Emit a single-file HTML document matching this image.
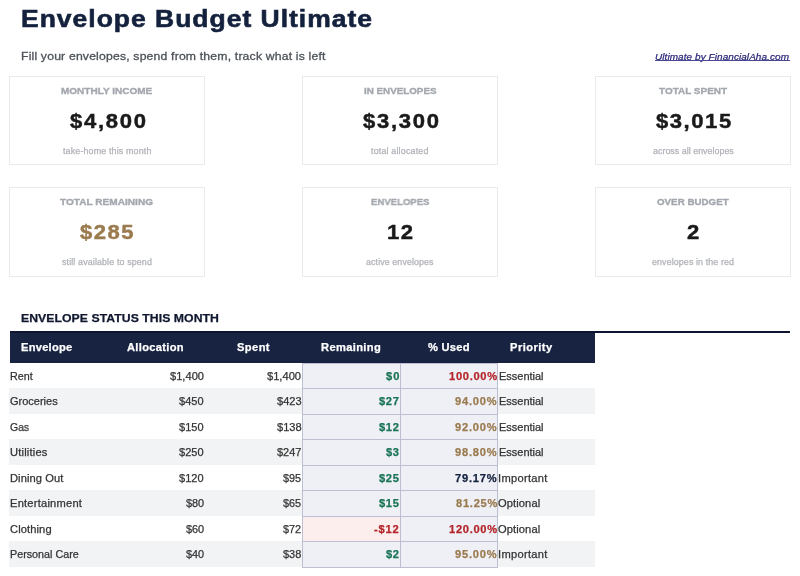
<!DOCTYPE html>
<html><head><meta charset="utf-8"><style>
html,body{margin:0;padding:0;background:#fff;width:800px;height:576px;overflow:hidden;position:relative}
body{font-family:"Liberation Sans",sans-serif}
.r{position:absolute}
.t{position:absolute;white-space:nowrap;line-height:normal;-webkit-text-stroke:0.25px currentColor}
.t span{display:inline-block;transform-origin:0 0;will-change:transform}
</style></head><body>
<div class="t" style="left:20.94px;top:5.20px;font-size:24.09px;font-weight:700;font-style:normal;color:#14213d;letter-spacing:0.903px;-webkit-text-stroke:0.6px currentColor"><span style="transform:scaleX(1.1000)">Envelope Budget Ultimate</span></div>
<div class="t" style="left:21.20px;top:49.80px;font-size:11.55px;font-weight:400;font-style:normal;color:#4d5259;letter-spacing:0.157px;-webkit-text-stroke:0.3px currentColor"><span style="transform:scaleX(1.0600)">Fill your envelopes, spend from them, track what is left</span></div>
<div class="t" style="left:654.95px;top:51.00px;font-size:9.45px;font-weight:400;font-style:italic;color:#2e2a7c;letter-spacing:0.058px"><span style="transform:scaleX(1.0600)">Ultimate by FinancialAha.com</span></div>
<div class="r" style="left:655px;top:60px;width:135px;height:1px;background:#4b4790"></div>
<div class="r" style="left:9px;top:76px;width:194px;height:87px;border:1px solid #eaeaec;background:#fff"></div>
<div class="t" style="left:61.21px;top:85.20px;font-size:9.72px;font-weight:700;font-style:normal;color:#a3a7ae;letter-spacing:0.000px;-webkit-text-stroke:0.35px currentColor"><span style="transform:scaleX(1.0299)">MONTHLY INCOME</span></div>
<div class="t" style="left:69.65px;top:109.30px;font-size:21.0px;font-weight:700;font-style:normal;color:#1a1a1a;letter-spacing:1.613px;-webkit-text-stroke:0.45px currentColor"><span style="transform:scaleX(1.0500)">$4,800</span></div>
<div class="t" style="left:62.86px;top:146.30px;font-size:8.4px;font-weight:400;font-style:normal;color:#b0b3b8;letter-spacing:0.147px"><span style="transform:scaleX(1.0600)">take-home this month</span></div>
<div class="r" style="left:302px;top:76px;width:194px;height:87px;border:1px solid #eaeaec;background:#fff"></div>
<div class="t" style="left:363.69px;top:85.20px;font-size:9.72px;font-weight:700;font-style:normal;color:#a3a7ae;letter-spacing:0.000px;-webkit-text-stroke:0.35px currentColor"><span style="transform:scaleX(1.0088)">IN ENVELOPES</span></div>
<div class="t" style="left:362.65px;top:109.30px;font-size:21.0px;font-weight:700;font-style:normal;color:#1a1a1a;letter-spacing:1.613px;-webkit-text-stroke:0.45px currentColor"><span style="transform:scaleX(1.0500)">$3,300</span></div>
<div class="t" style="left:371.36px;top:146.30px;font-size:8.4px;font-weight:400;font-style:normal;color:#b0b3b8;letter-spacing:0.173px"><span style="transform:scaleX(1.0600)">total allocated</span></div>
<div class="r" style="left:595px;top:76px;width:194px;height:87px;border:1px solid #eaeaec;background:#fff"></div>
<div class="t" style="left:658.89px;top:85.20px;font-size:9.72px;font-weight:700;font-style:normal;color:#a3a7ae;letter-spacing:0.000px;-webkit-text-stroke:0.35px currentColor"><span style="transform:scaleX(1.0245)">TOTAL SPENT</span></div>
<div class="t" style="left:655.65px;top:109.30px;font-size:21.0px;font-weight:700;font-style:normal;color:#1a1a1a;letter-spacing:1.468px;-webkit-text-stroke:0.45px currentColor"><span style="transform:scaleX(1.0500)">$3,015</span></div>
<div class="t" style="left:652.60px;top:146.30px;font-size:8.4px;font-weight:400;font-style:normal;color:#b0b3b8;letter-spacing:0.018px"><span style="transform:scaleX(1.0600)">across all envelopes</span></div>
<div class="r" style="left:9px;top:187px;width:194px;height:88px;border:1px solid #eaeaec;background:#fff"></div>
<div class="t" style="left:60.26px;top:196.20px;font-size:9.72px;font-weight:700;font-style:normal;color:#a3a7ae;letter-spacing:-0.000px;-webkit-text-stroke:0.35px currentColor"><span style="transform:scaleX(1.0378)">TOTAL REMAINING</span></div>
<div class="t" style="left:80.41px;top:220.30px;font-size:21.0px;font-weight:700;font-style:normal;color:#9a7b4f;letter-spacing:1.454px;-webkit-text-stroke:0.45px currentColor"><span style="transform:scaleX(1.0500)">$285</span></div>
<div class="t" style="left:62.08px;top:257.30px;font-size:8.4px;font-weight:400;font-style:normal;color:#b0b3b8;letter-spacing:0.123px"><span style="transform:scaleX(1.0600)">still available to spend</span></div>
<div class="r" style="left:302px;top:187px;width:194px;height:88px;border:1px solid #eaeaec;background:#fff"></div>
<div class="t" style="left:370.72px;top:196.20px;font-size:9.72px;font-weight:700;font-style:normal;color:#a3a7ae;letter-spacing:0.000px;-webkit-text-stroke:0.35px currentColor"><span style="transform:scaleX(0.9829)">ENVELOPES</span></div>
<div class="t" style="left:387.02px;top:220.30px;font-size:21.0px;font-weight:700;font-style:normal;color:#1a1a1a;letter-spacing:1.488px;-webkit-text-stroke:0.45px currentColor"><span style="transform:scaleX(1.0500)">12</span></div>
<div class="t" style="left:366.21px;top:257.30px;font-size:8.4px;font-weight:400;font-style:normal;color:#b0b3b8;letter-spacing:0.089px"><span style="transform:scaleX(1.0600)">active envelopes</span></div>
<div class="r" style="left:595px;top:187px;width:194px;height:88px;border:1px solid #eaeaec;background:#fff"></div>
<div class="t" style="left:657.17px;top:196.20px;font-size:9.72px;font-weight:700;font-style:normal;color:#a3a7ae;letter-spacing:0.000px;-webkit-text-stroke:0.35px currentColor"><span style="transform:scaleX(1.0053)">OVER BUDGET</span></div>
<div class="t" style="left:686.88px;top:220.30px;font-size:21.0px;font-weight:700;font-style:normal;color:#1a1a1a;letter-spacing:0.000px;-webkit-text-stroke:0.45px currentColor"><span style="transform:scaleX(1.0494)">2</span></div>
<div class="t" style="left:651.93px;top:257.30px;font-size:8.4px;font-weight:400;font-style:normal;color:#b0b3b8;letter-spacing:0.101px"><span style="transform:scaleX(1.0600)">envelopes in the red</span></div>
<div class="t" style="left:21.20px;top:311.80px;font-size:11.55px;font-weight:700;font-style:normal;color:#101830;letter-spacing:0.043px"><span style="transform:scaleX(1.0600)">ENVELOPE STATUS THIS MONTH</span></div>
<div class="r" style="left:10px;top:331px;width:780px;height:2px;background:#0d1530"></div>
<div class="r" style="left:10px;top:333px;width:585px;height:30px;background:#172341"></div>
<div class="t" style="left:21.08px;top:341.25px;font-size:10.5px;font-weight:700;font-style:normal;color:#fff;letter-spacing:0.238px"><span style="transform:scaleX(1.0600)">Envelope</span></div>
<div class="t" style="left:127.00px;top:341.25px;font-size:10.5px;font-weight:700;font-style:normal;color:#fff;letter-spacing:0.289px"><span style="transform:scaleX(1.0600)">Allocation</span></div>
<div class="t" style="left:237.03px;top:341.25px;font-size:10.5px;font-weight:700;font-style:normal;color:#fff;letter-spacing:0.389px"><span style="transform:scaleX(1.0600)">Spent</span></div>
<div class="t" style="left:320.82px;top:341.25px;font-size:10.5px;font-weight:700;font-style:normal;color:#fff;letter-spacing:0.338px"><span style="transform:scaleX(1.0600)">Remaining</span></div>
<div class="t" style="left:427.54px;top:341.25px;font-size:10.5px;font-weight:700;font-style:normal;color:#fff;letter-spacing:0.242px"><span style="transform:scaleX(1.0600)">% Used</span></div>
<div class="t" style="left:509.58px;top:341.25px;font-size:10.5px;font-weight:700;font-style:normal;color:#fff;letter-spacing:0.434px"><span style="transform:scaleX(1.0600)">Priority</span></div>
<div class="r" style="left:302px;top:363px;width:98px;height:25px;background:#eef0f6"></div>
<div class="r" style="left:400px;top:363px;width:97.5px;height:25px;background:#eef0f6"></div>
<div class="r" style="left:9px;top:388px;width:586px;height:26px;background:#f2f3f5"></div>
<div class="r" style="left:302px;top:388px;width:98px;height:26px;background:#eef0f6"></div>
<div class="r" style="left:400px;top:388px;width:97.5px;height:26px;background:#eef0f6"></div>
<div class="r" style="left:302px;top:414px;width:98px;height:25px;background:#eef0f6"></div>
<div class="r" style="left:400px;top:414px;width:97.5px;height:25px;background:#eef0f6"></div>
<div class="r" style="left:9px;top:439px;width:586px;height:26px;background:#f2f3f5"></div>
<div class="r" style="left:302px;top:439px;width:98px;height:26px;background:#eef0f6"></div>
<div class="r" style="left:400px;top:439px;width:97.5px;height:26px;background:#eef0f6"></div>
<div class="r" style="left:302px;top:465px;width:98px;height:25px;background:#eef0f6"></div>
<div class="r" style="left:400px;top:465px;width:97.5px;height:25px;background:#eef0f6"></div>
<div class="r" style="left:9px;top:490px;width:586px;height:26px;background:#f2f3f5"></div>
<div class="r" style="left:302px;top:490px;width:98px;height:26px;background:#eef0f6"></div>
<div class="r" style="left:400px;top:490px;width:97.5px;height:26px;background:#eef0f6"></div>
<div class="r" style="left:302px;top:516px;width:98px;height:25px;background:#eef0f6"></div>
<div class="r" style="left:400px;top:516px;width:97.5px;height:25px;background:#eef0f6"></div>
<div class="r" style="left:302px;top:516px;width:98px;height:25px;background:#fdeeee"></div>
<div class="r" style="left:9px;top:541px;width:586px;height:26px;background:#f2f3f5"></div>
<div class="r" style="left:302px;top:541px;width:98px;height:26px;background:#eef0f6"></div>
<div class="r" style="left:400px;top:541px;width:97.5px;height:26px;background:#eef0f6"></div>
<div class="r" style="left:302px;top:363px;width:196px;height:1px;background:#bcbfd2"></div>
<div class="r" style="left:302px;top:388px;width:196px;height:1px;background:#bcbfd2"></div>
<div class="r" style="left:302px;top:414px;width:196px;height:1px;background:#bcbfd2"></div>
<div class="r" style="left:302px;top:439px;width:196px;height:1px;background:#bcbfd2"></div>
<div class="r" style="left:302px;top:465px;width:196px;height:1px;background:#bcbfd2"></div>
<div class="r" style="left:302px;top:490px;width:196px;height:1px;background:#bcbfd2"></div>
<div class="r" style="left:302px;top:516px;width:196px;height:1px;background:#bcbfd2"></div>
<div class="r" style="left:302px;top:541px;width:196px;height:1px;background:#bcbfd2"></div>
<div class="r" style="left:302px;top:567px;width:196px;height:1px;background:#bcbfd2"></div>
<div class="r" style="left:302px;top:363px;width:1px;height:205px;background:#bcbfd2"></div>
<div class="r" style="left:400px;top:363px;width:1px;height:205px;background:#bcbfd2"></div>
<div class="r" style="left:497px;top:363px;width:1px;height:205px;background:#bcbfd2"></div>
<div class="t" style="left:10.30px;top:369.60px;font-size:10.5px;font-weight:400;font-style:normal;color:#333;letter-spacing:0.000px"><span style="transform:scaleX(1.0235)">Rent</span></div>
<div class="t" style="left:169.75px;top:369.60px;font-size:10.5px;font-weight:400;font-style:normal;color:#333;letter-spacing:-0.000px"><span style="transform:scaleX(1.0593)">$1,400</span></div>
<div class="t" style="left:267.25px;top:369.60px;font-size:10.5px;font-weight:400;font-style:normal;color:#333;letter-spacing:-0.000px"><span style="transform:scaleX(1.0593)">$1,400</span></div>
<div class="t" style="left:385.90px;top:369.60px;font-size:10.5px;font-weight:700;font-style:normal;color:#1a7355;letter-spacing:0.903px"><span style="transform:scaleX(1.0600)">$0</span></div>
<div class="t" style="left:448.85px;top:369.60px;font-size:10.5px;font-weight:700;font-style:normal;color:#b3262a;letter-spacing:0.658px"><span style="transform:scaleX(1.0600)">100.00%</span></div>
<div class="t" style="left:498.58px;top:369.60px;font-size:10.5px;font-weight:400;font-style:normal;color:#333;letter-spacing:0.000px"><span style="transform:scaleX(1.0457)">Essential</span></div>
<div class="t" style="left:10.18px;top:395.10px;font-size:10.5px;font-weight:400;font-style:normal;color:#333;letter-spacing:0.000px"><span style="transform:scaleX(1.0476)">Groceries</span></div>
<div class="t" style="left:179.29px;top:395.10px;font-size:10.5px;font-weight:400;font-style:normal;color:#333;letter-spacing:0.000px"><span style="transform:scaleX(1.0492)">$450</span></div>
<div class="t" style="left:276.79px;top:395.10px;font-size:10.5px;font-weight:400;font-style:normal;color:#333;letter-spacing:0.000px"><span style="transform:scaleX(1.0495)">$423</span></div>
<div class="t" style="left:378.94px;top:395.10px;font-size:10.5px;font-weight:700;font-style:normal;color:#1a7355;letter-spacing:0.643px"><span style="transform:scaleX(1.0600)">$27</span></div>
<div class="t" style="left:455.45px;top:395.10px;font-size:10.5px;font-weight:700;font-style:normal;color:#9a7b4f;letter-spacing:0.712px"><span style="transform:scaleX(1.0600)">94.00%</span></div>
<div class="t" style="left:498.58px;top:395.10px;font-size:10.5px;font-weight:400;font-style:normal;color:#333;letter-spacing:0.000px"><span style="transform:scaleX(1.0457)">Essential</span></div>
<div class="t" style="left:10.21px;top:420.60px;font-size:10.5px;font-weight:400;font-style:normal;color:#333;letter-spacing:0.000px"><span style="transform:scaleX(0.9864)">Gas</span></div>
<div class="t" style="left:179.29px;top:420.60px;font-size:10.5px;font-weight:400;font-style:normal;color:#333;letter-spacing:0.000px"><span style="transform:scaleX(1.0492)">$150</span></div>
<div class="t" style="left:276.79px;top:420.60px;font-size:10.5px;font-weight:400;font-style:normal;color:#333;letter-spacing:0.000px"><span style="transform:scaleX(1.0549)">$138</span></div>
<div class="t" style="left:378.94px;top:420.60px;font-size:10.5px;font-weight:700;font-style:normal;color:#1a7355;letter-spacing:0.643px"><span style="transform:scaleX(1.0600)">$12</span></div>
<div class="t" style="left:455.45px;top:420.60px;font-size:10.5px;font-weight:700;font-style:normal;color:#9a7b4f;letter-spacing:0.712px"><span style="transform:scaleX(1.0600)">92.00%</span></div>
<div class="t" style="left:498.58px;top:420.60px;font-size:10.5px;font-weight:400;font-style:normal;color:#333;letter-spacing:0.000px"><span style="transform:scaleX(1.0457)">Essential</span></div>
<div class="t" style="left:10.28px;top:446.10px;font-size:10.5px;font-weight:400;font-style:normal;color:#333;letter-spacing:0.181px"><span style="transform:scaleX(1.0600)">Utilities</span></div>
<div class="t" style="left:179.29px;top:446.10px;font-size:10.5px;font-weight:400;font-style:normal;color:#333;letter-spacing:0.000px"><span style="transform:scaleX(1.0492)">$250</span></div>
<div class="t" style="left:276.79px;top:446.10px;font-size:10.5px;font-weight:400;font-style:normal;color:#333;letter-spacing:0.000px"><span style="transform:scaleX(1.0440)">$247</span></div>
<div class="t" style="left:385.90px;top:446.10px;font-size:10.5px;font-weight:700;font-style:normal;color:#1a7355;letter-spacing:0.425px"><span style="transform:scaleX(1.0600)">$3</span></div>
<div class="t" style="left:455.45px;top:446.10px;font-size:10.5px;font-weight:700;font-style:normal;color:#9a7b4f;letter-spacing:0.712px"><span style="transform:scaleX(1.0600)">98.80%</span></div>
<div class="t" style="left:498.58px;top:446.10px;font-size:10.5px;font-weight:400;font-style:normal;color:#333;letter-spacing:0.000px"><span style="transform:scaleX(1.0457)">Essential</span></div>
<div class="t" style="left:10.27px;top:471.60px;font-size:10.5px;font-weight:400;font-style:normal;color:#333;letter-spacing:0.073px"><span style="transform:scaleX(1.0600)">Dining Out</span></div>
<div class="t" style="left:179.29px;top:471.60px;font-size:10.5px;font-weight:400;font-style:normal;color:#333;letter-spacing:0.000px"><span style="transform:scaleX(1.0492)">$120</span></div>
<div class="t" style="left:283.16px;top:471.60px;font-size:10.5px;font-weight:400;font-style:normal;color:#333;letter-spacing:0.000px"><span style="transform:scaleX(1.0296)">$95</span></div>
<div class="t" style="left:378.94px;top:471.60px;font-size:10.5px;font-weight:700;font-style:normal;color:#1a7355;letter-spacing:0.639px"><span style="transform:scaleX(1.0600)">$25</span></div>
<div class="t" style="left:455.44px;top:471.60px;font-size:10.5px;font-weight:700;font-style:normal;color:#14213d;letter-spacing:0.714px"><span style="transform:scaleX(1.0600)">79.17%</span></div>
<div class="t" style="left:498.44px;top:471.60px;font-size:10.5px;font-weight:400;font-style:normal;color:#333;letter-spacing:0.283px"><span style="transform:scaleX(1.0600)">Important</span></div>
<div class="t" style="left:10.27px;top:497.10px;font-size:10.5px;font-weight:400;font-style:normal;color:#333;letter-spacing:0.207px"><span style="transform:scaleX(1.0600)">Entertainment</span></div>
<div class="t" style="left:185.66px;top:497.10px;font-size:10.5px;font-weight:400;font-style:normal;color:#333;letter-spacing:0.000px"><span style="transform:scaleX(1.0368)">$80</span></div>
<div class="t" style="left:283.16px;top:497.10px;font-size:10.5px;font-weight:400;font-style:normal;color:#333;letter-spacing:0.000px"><span style="transform:scaleX(1.0296)">$65</span></div>
<div class="t" style="left:378.94px;top:497.10px;font-size:10.5px;font-weight:700;font-style:normal;color:#1a7355;letter-spacing:0.639px"><span style="transform:scaleX(1.0600)">$15</span></div>
<div class="t" style="left:455.57px;top:497.10px;font-size:10.5px;font-weight:700;font-style:normal;color:#9a7b4f;letter-spacing:0.689px"><span style="transform:scaleX(1.0600)">81.25%</span></div>
<div class="t" style="left:498.47px;top:497.10px;font-size:10.5px;font-weight:400;font-style:normal;color:#333;letter-spacing:0.098px"><span style="transform:scaleX(1.0600)">Optional</span></div>
<div class="t" style="left:10.17px;top:522.60px;font-size:10.5px;font-weight:400;font-style:normal;color:#333;letter-spacing:0.103px"><span style="transform:scaleX(1.0600)">Clothing</span></div>
<div class="t" style="left:185.66px;top:522.60px;font-size:10.5px;font-weight:400;font-style:normal;color:#333;letter-spacing:0.000px"><span style="transform:scaleX(1.0368)">$60</span></div>
<div class="t" style="left:283.16px;top:522.60px;font-size:10.5px;font-weight:400;font-style:normal;color:#333;letter-spacing:0.000px"><span style="transform:scaleX(1.0222)">$72</span></div>
<div class="t" style="left:374.28px;top:522.60px;font-size:10.5px;font-weight:700;font-style:normal;color:#b3262a;letter-spacing:0.760px"><span style="transform:scaleX(1.0600)">-$12</span></div>
<div class="t" style="left:448.85px;top:522.60px;font-size:10.5px;font-weight:700;font-style:normal;color:#b3262a;letter-spacing:0.658px"><span style="transform:scaleX(1.0600)">120.00%</span></div>
<div class="t" style="left:498.47px;top:522.60px;font-size:10.5px;font-weight:400;font-style:normal;color:#333;letter-spacing:0.098px"><span style="transform:scaleX(1.0600)">Optional</span></div>
<div class="t" style="left:10.30px;top:548.10px;font-size:10.5px;font-weight:400;font-style:normal;color:#333;letter-spacing:0.000px"><span style="transform:scaleX(1.0247)">Personal Care</span></div>
<div class="t" style="left:185.66px;top:548.10px;font-size:10.5px;font-weight:400;font-style:normal;color:#333;letter-spacing:0.000px"><span style="transform:scaleX(1.0368)">$40</span></div>
<div class="t" style="left:283.15px;top:548.10px;font-size:10.5px;font-weight:400;font-style:normal;color:#333;letter-spacing:0.000px"><span style="transform:scaleX(1.0444)">$38</span></div>
<div class="t" style="left:385.90px;top:548.10px;font-size:10.5px;font-weight:700;font-style:normal;color:#1a7355;letter-spacing:0.550px"><span style="transform:scaleX(1.0600)">$2</span></div>
<div class="t" style="left:455.45px;top:548.10px;font-size:10.5px;font-weight:700;font-style:normal;color:#9a7b4f;letter-spacing:0.712px"><span style="transform:scaleX(1.0600)">95.00%</span></div>
<div class="t" style="left:498.44px;top:548.10px;font-size:10.5px;font-weight:400;font-style:normal;color:#333;letter-spacing:0.283px"><span style="transform:scaleX(1.0600)">Important</span></div>
</body></html>
